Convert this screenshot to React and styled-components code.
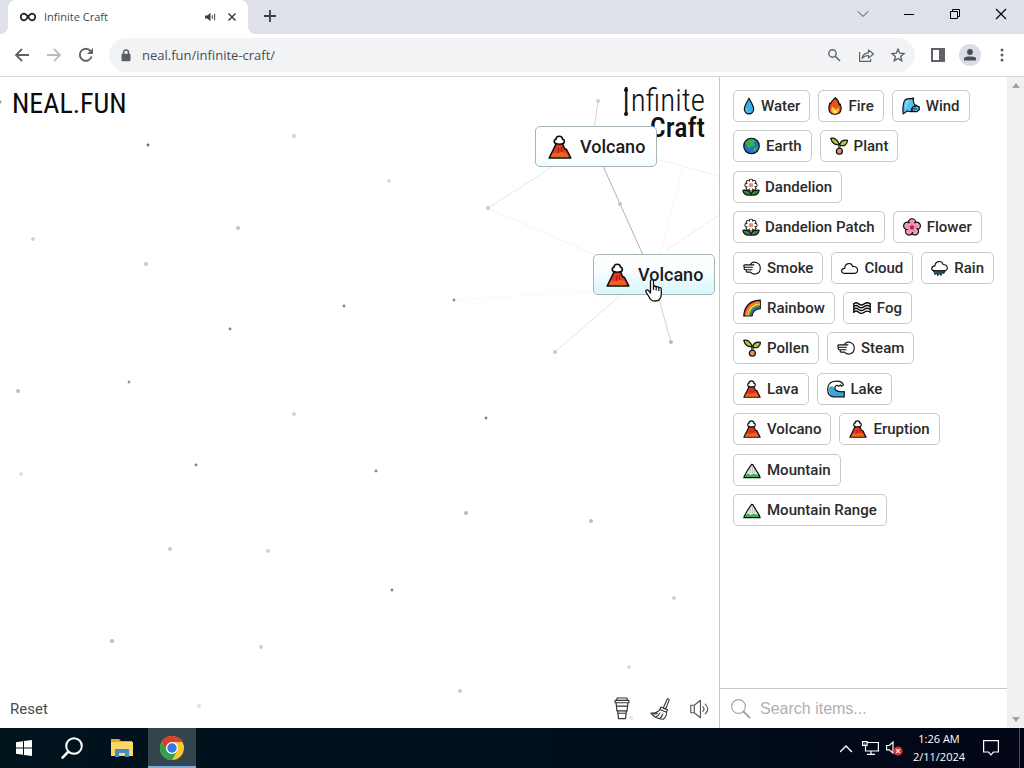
import React from 'react';
import styled, { createGlobalStyle } from 'styled-components';

const GlobalStyle = createGlobalStyle`
  *, *::before, *::after { box-sizing: border-box; }
  body { margin: 0; background: #fff; font-family: Roboto, "Liberation Sans", sans-serif; color: #1b1b1b; }
  button { font: inherit; color: inherit; background: none; border: 0; padding: 0; }
  svg { display: block; flex: none; overflow: visible; }
`;

const uiFont = '"Segoe UI", "Open Sans", "Noto Sans", sans-serif';

/* ---------- window frame ---------- */

const Window = styled.div`
  min-height: 100vh;
  display: grid;
  grid-template-rows: 34px 43px 1fr 40px;
`;

const TabStrip = styled.header`
  display: flex;
  background: #dee1e7;
  padding-left: 8px;
  font-family: ${uiFont};
`;

const Tab = styled.div`
  position: relative;
  display: flex;
  align-items: center;
  width: 240px;
  padding: 0 2px 0 12px;
  background: #fff;
  border-radius: 8px 8px 0 0;
  font-size: 11px;
  line-height: 16px;
  color: #45494d;

  &::before, &::after {
    content: "";
    position: absolute;
    bottom: 0;
    width: 8px;
    height: 8px;
  }
  &::before { left: -8px; background: radial-gradient(circle at 0 0, #dee1e7 8px, #fff 8px); }
  &::after { right: -8px; background: radial-gradient(circle at 100% 0, #dee1e7 8px, #fff 8px); }
`;

const TabTitle = styled.span`
  flex: 1;
  margin-left: 8px;
`;

const IconButton = styled.button`
  display: flex;
  align-items: center;
  justify-content: center;
  flex: none;
  width: ${(p) => p.$w || 32}px;
  height: ${(p) => p.$h || 32}px;
  color: ${(p) => p.$color || '#5f6368'};
`;

const NewTab = styled(IconButton)`
  margin-left: 6px;
`;

const WindowControls = styled.div`
  display: flex;
  margin-left: auto;
  color: #111;
`;

const Toolbar = styled.nav`
  display: flex;
  align-items: center;
  padding: 0 6px;
  background: #fff;
  border-bottom: 1px solid #d5d9dc;
`;

const Omnibox = styled.div`
  flex: 1;
  min-width: 0;
  display: flex;
  align-items: center;
  height: 34px;
  margin: 0 7px;
  padding: 0 1px 0 11px;
  border-radius: 17px;
  background: #f1f3f4;
`;

const UrlInput = styled.input`
  flex: 1;
  min-width: 0;
  margin-left: 10px;
  padding: 0;
  border: 0;
  outline: 0;
  background: none;
  font: 13px/20px ${uiFont};
  color: #4a4e52;
`;

const Avatar = styled.span`
  display: grid;
  place-items: center;
  width: 22px;
  height: 22px;
  border-radius: 50%;
  background: #dadde5;
`;

/* ---------- game page ---------- */

const Page = styled.main`
  display: grid;
  grid-template-columns: minmax(0, 1fr) 288px 17px;
`;

const Board = styled.section`
  position: relative;
  overflow: hidden;
  display: flex;
  flex-direction: column;
  justify-content: space-between;
  background: #fff;
`;

const Particles = styled.svg`
  position: absolute;
  left: 0;
  top: 0;
`;

const BoardHeader = styled.div`
  display: flex;
  justify-content: space-between;
  padding: 8px 14px 0 12px;
`;

const SiteLogo = styled.a`
  color: #0b0b0b;
  text-decoration: none;
  font-family: "Roboto Condensed", "Liberation Sans Narrow", "Liberation Sans", sans-serif;
  font-size: 28px;
  line-height: 38px;
`;

const GameLogo = styled.h1`
  margin: 0;
  display: flex;
  flex-direction: column;
  align-items: flex-end;
  color: #111;
  font-family: "Roboto Condensed", Roboto, sans-serif;
  font-size: 31px;
  font-weight: 300;
  line-height: 32px;
`;

const LogoInitial = styled.span`
  position: relative;
  display: inline-block;
  font-size: 38px;
  line-height: 30px;
  vertical-align: -4px;

  &::before, &::after {
    content: "";
    position: absolute;
    left: 50%;
    width: 4px;
    height: 4px;
    margin-left: -2px;
    border-radius: 50%;
    background: #111;
  }
  &::before { top: 1px; }
  &::after { bottom: 1px; }
`;

const LogoSecond = styled.span`
  font-size: 28px;
  font-weight: 500;
  line-height: 22px;
`;

const Instance = styled.button`
  position: absolute;
  left: ${(p) => p.$x}px;
  top: ${(p) => p.$y}px;
  display: flex;
  align-items: center;
  gap: 8px;
  height: 41px;
  padding: 0 11px 0 12px;
  border: 1px solid #a5b4b8;
  border-radius: 5px;
  background: ${(p) => (p.$hover ? 'linear-gradient(#fff, #fafeff 35%, #d7f6fb)' : 'linear-gradient(#fff 60%, #f2fdfe)')};
  font-size: 18px;
  font-weight: 500;
  line-height: 24px;
`;

const Pointer = styled.svg`
  position: absolute;
  left: 645px;
  top: 202px;
`;

const BoardFooter = styled.div`
  position: relative;
  display: flex;
  align-items: center;
  height: 39px;
  padding-left: 10px;
`;

const ResetButton = styled.button`
  margin-right: auto;
  font-size: 15px;
  line-height: 20px;
  color: #4c4c4c;
`;

const Sidebar = styled.aside`
  display: flex;
  flex-direction: column;
  border-left: 1px solid #c4c8c9;
  background: #fff;
`;

const ItemList = styled.ul`
  list-style: none;
  margin: 0;
  padding: 13px 12px 13px 13px;
  display: flex;
  flex-wrap: wrap;
  align-content: space-between;
  gap: 8px;
  min-height: 462px;
`;

const Chip = styled.button`
  display: flex;
  align-items: center;
  gap: 6px;
  height: 32px;
  padding: 0 9px;
  border: 1px solid #c8c8c8;
  border-radius: 5px;
  background: #fff;
  font-size: 15px;
  font-weight: 500;
  line-height: 20px;
  color: #2b2b2b;
`;

const SearchBar = styled.label`
  display: flex;
  align-items: center;
  gap: 10px;
  height: 40px;
  margin-top: auto;
  padding: 0 11px;
  border-top: 1px solid #c8c8c8;
  color: #a3a3a3;
`;

const SearchInput = styled.input`
  flex: 1;
  min-width: 0;
  padding: 0;
  border: 0;
  outline: 0;
  background: none;
  font: 16px/24px "Liberation Sans", Arial, sans-serif;
  &::placeholder { color: #b0b0b0; opacity: 1; }
`;

const ScrollTrack = styled.div`
  display: flex;
  flex-direction: column;
  align-items: center;
  justify-content: space-between;
  padding: 6px 0;
  background: #f1f1f2;
`;

/* ---------- taskbar ---------- */

const Taskbar = styled.footer`
  display: flex;
  align-items: stretch;
  background: linear-gradient(90deg, #00141c, #00101c 50%, #030617);
  color: #fff;
  font-family: ${uiFont};
`;

const TaskButton = styled.button`
  display: grid;
  place-items: center;
  width: ${(p) => p.$w || 48}px;
  height: 40px;
  color: #fff;
  background: ${(p) => (p.$active ? '#33464e' : 'none')};
  box-shadow: ${(p) => (p.$active ? 'inset 0 -2px #76aede' : 'none')};
`;

const Tray = styled.div`
  display: flex;
  align-items: center;
  margin-left: auto;
  padding-right: 4px;
`;

const Clock = styled.time`
  width: 66px;
  text-align: center;
  font-size: 11px;
  line-height: 18px;
`;

const DesktopEdge = styled.span`
  width: 1px;
  height: 40px;
  margin-left: 9px;
  background: #46505b;
`;

/* ---------- item icons, 24 unit grid ---------- */

const ink = { stroke: '#0c0c0c', strokeWidth: 1.6, strokeLinejoin: 'round', strokeLinecap: 'round' };

const volcano = (
  <>
    <path {...ink} fill="#e3371e" d="M8.500 8 1.200 23h21.600L18.500 14.500l-2-1-2.300-5.500z" />
    <path fill="#f07c20" d="M5 17.500l4 1 4-1.500 5.500.8 2.300 4.400H2.500z" opacity=".65" />
    <path d="M10.500 13v5M13.500 12v5" stroke="#a81a14" strokeWidth="1" fill="none" />
    <path {...ink} fill="#fff" d="M8.500 8.800C5.500 8.500 5.600 4.600 8 4.200 8 .2 14.500.2 14.500 4.200c2.600.4 2.500 4.400-.3 4.600-1.700.5-4 .5-5.700 0z" />
  </>
);
const sprout = (
  <>
    <path d="M12.500 17V9.500" {...ink} fill="none" strokeWidth="3" />
    <path d="M12.500 17V9.500" stroke="#8aa82a" strokeWidth="1.200" />
    <path {...ink} fill="#a8cc3c" d="M12 10C7 11.500 2.500 8 1 1.800c5-1 10 2 11 8.200z" />
    <path {...ink} fill="#a8cc3c" d="M13 11c0-5 4-7.500 10.200-6.500 0 5.500-4.500 8.500-10.200 6.500z" />
    <circle {...ink} cx="12.500" cy="19" r="4" fill="#e8915a" />
  </>
);
const petals = [0, 45, 90, 135, 180, 225, 270, 315];
const daisy = (
  <>
    <path {...ink} fill="#2f8a3c" d="M12 22.800C6 24 2 22 .8 16.500c5-.8 9 .5 11.200 5 2-4.500 6-5.800 11.200-5-1.200 5.500-5.200 7.500-11.200 6.300z" />
    {petals.map((a) => (
      <circle key={a} cx="12" cy="3.800" r="3.300" fill="#1a1a1a" transform={`rotate(${a} 12 9.500)`} />
    ))}
    {petals.map((a) => (
      <ellipse key={a} cx="12" cy="4.800" rx="1.900" ry="3" fill="#fff" transform={`rotate(${a} 12 9.500)`} />
    ))}
    <circle cx="12" cy="9.500" r="3.800" fill="#fff" />
    <circle cx="12" cy="9.500" r="3" fill="#e58f62" />
  </>
);
const puff = (
  <path {...ink} strokeWidth="1.500" fill="#fff" d="M10.500 6.500C13.500 2.500 23 4 23 12.300c0 8.200-9.500 9.700-13 5.200H5.500c-1.800 0-1.800-3.200 0-3.200H12M8 14.300H3c-2 0-2-3.300 0-3.300h9.500M6 11H2.500C.5 11 .5 7.800 2.500 7.800h12" />
);
const mountainOutline = 'M1.200 22.200C2 18 4.500 16.500 6 12.500L11.500 4.500l1.500.3 4 6.700c1 3 5 6 5.800 10.700z';
const mountain = (
  <>
    <path fill="#ececec" d={mountainOutline} />
    <path fill="#3fb154" d="M3.500 18 7 16.500l3 2 4-2 3 1.500 3.500-.5 2 4.500h-21z" />
    <path d="M9.500 10.500v6M12.500 8v8M15.500 11.500v5" stroke="#b4b4b4" strokeWidth="1.200" />
    <path {...ink} fill="none" d={mountainOutline} />
  </>
);

const ICONS = {
  water: { w: 12, box: '5 0 14 24', art: (
    <>
      <path {...ink} fill="#36b1e0" d="M12 1.500C9.500 7 5.800 11.500 5.800 16.300a6.200 6.200 0 0 0 12.400 0C18.200 11.500 14.500 7 12 1.500z" />
      <path d="M8.500 15c0 3 1.500 4.500 3.500 5" stroke="#7fd3ee" strokeWidth="1.300" fill="none" />
    </>
  ) },
  fire: { w: 14, box: '3 0 18 24', art: (
    <>
      <path {...ink} fill="#e8541d" d="M12.500 1C10 4 7 5 6.200 9L5.200 8C2.500 15 3 23 12 23c8.500 0 9.500-7.500 7-13.500l-1.200 1C17.500 7 15.500 3.500 12.500 1z" />
      <path fill="#fbc62d" d="M8.500 12.500c-3 5-1.500 9.500 3.500 9.500s6-5 4-8.500L13.500 17z" />
      <path fill="#fff2a0" d="M10 19.500 12 17l2 3-2 1.500z" />
    </>
  ) },
  wind: { w: 18, box: '0 0 24 24', art: (
    <>
      <path {...ink} fill="#58c4ee" d="M1.500 22.500C1 15 .5 7 4.500 3.500 8 1.500 12.500 3 15.500 1.500c-1.500 3 0 6.500 1.500 9.500l-1 4.500c-2 4-5 4.500-7.500 3.500C5.500 18 4.500 21.500 1.500 22.500z" />
      <path {...ink} fill="#4fb2e6" d="M14.500 13h3.500l.5-2.500L21 12.500l2 .5v4l-3 2.500h-5.500l-2-3z" />
      <path d="M14 16h5" {...ink} strokeWidth="1.200" />
      <path d="M5 14c0-4 1-7 3-9" stroke="#b4e8fa" strokeWidth="1.500" fill="none" />
    </>
  ) },
  earth: { w: 17, box: '0 0 24 24', art: (
    <>
      <circle {...ink} cx="12" cy="12" r="11" fill="#2672c8" />
      <path fill="#35b14b" d="M3 8c2-4 6-6 11-5.500l3 2-2 3.500 2.500 2-3 3-3-1-2 4-3-2-1-3zM15 15l5-2 1 1-4 6-3-1z" />
    </>
  ) },
  plant: { w: 18, box: '0 0 24 24', art: sprout },
  daisy: { w: 16, box: '1 0 22 24', art: daisy },
  flower: { w: 18, box: '0 0 24 24', art: (
    <>
      <g fill="#f39ac0" {...ink}>
        {[0, 72, 144, 216, 288].map((a) => (
          <ellipse key={a} cx="12" cy="5.800" rx="4.800" ry="4.800" transform={`rotate(${a} 12 12.500)`} />
        ))}
      </g>
      <circle cx="12" cy="12.500" r="6.200" fill="#f39ac0" />
      <path d="M12 6v7M6 10.500l6 2 6-2M8.500 17.500l3.500-5 3.500 5" stroke="#d95c94" strokeWidth="1" fill="none" />
      <circle cx="12" cy="12.500" r="2.800" fill="#b8265e" />
    </>
  ) },
  puff: { w: 18, box: '0 0 24 24', art: puff },
  cloud: { w: 17, box: '0 0 24 24', art: (
    <path {...ink} fill="#fff" d="M5 19.500C-.5 19.500-.5 12.500 5.200 12.500 5.500 4.500 15 3.500 16.500 10c8.300-1 9.100 9.500 2.500 9.500z" />
  ) },
  rain: { w: 17, box: '0 0 24 24', art: (
    <>
      <path {...ink} fill="#fff" d="M4.500 16C-.8 15 .5 9 5.500 9 6 1.500 15.500 1 17 7c7.300 0 7.800 8 2 9z" />
      <path {...ink} fill="#24566b" strokeWidth="1.200" d="M4 16h16l-2 4-1.500-2L14 22.500l-2-3-2.500 3.500-1.500-4-2 2z" />
    </>
  ) },
  rainbow: { w: 18, box: '0 0 24 24', art: (
    <>
      <path {...ink} fill="#d92b2b" d="M1 22.500C2 9 10 2 23 1.500V13c-6 0-10 4-11 9.500z" />
      <path d="M4 22C5.500 11.500 12 5 22.500 4.500" stroke="#f28a28" strokeWidth="2.400" fill="none" />
      <path d="M6.300 22C8 13 13.500 7.500 22.500 6.800" stroke="#f7d13a" strokeWidth="2.200" fill="none" />
      <path d="M8.500 22c1.500-7.500 6.500-12.500 14-13" stroke="#3ba350" strokeWidth="2" fill="none" />
      <path d="M10.500 22c1.500-6.500 6-10.500 12-11" stroke="#2c5fc4" strokeWidth="2.200" fill="none" />
    </>
  ) },
  fog: { w: 18, box: '0 0 24 24', art: (
    <>
      {[6.500, 10.200, 13.900, 17.600].map((y) => (
        <path key={y} {...ink} fill="none" strokeWidth="1.800" d={`M1 ${y}q3-3 6.500 0t7.500 0q4-3 8 0`} />
      ))}
      <path {...ink} fill="none" d="M1 6.500v11M23 6.500v11" />
    </>
  ) },
  volcano: { w: 18, box: '0 0 24 24', art: volcano },
  lake: { w: 18, box: '0 0 24 24', art: (
    <>
      <path fill="#fff" d="M23 22.500H9C-2 21-1.500 4.500 8.500 2 15 .5 20 2 22 7l-4 1.500c-5-2-8 1-7 4.500 1.500 2 6 3 12 2.500z" />
      <path fill="#38a6de" d="M2 10.500C5 7 8 8 11 12.500c2 3 6 3.500 12 3v6.500H9.500C4.500 21 2 16 2 10.500z" />
      <path {...ink} fill="none" d="M23 22.500H9C-2 21-1.500 4.500 8.500 2 15 .5 20 2 22 6.500l-2.500 2-1.500-2-2.500 2-2-1.500C10.500 8 10 10.500 11 12.500c2 3 6 3.500 12 3z" />
    </>
  ) },
  mountain: { w: 18, box: '0 0 24 24', art: mountain },
};

function ItemIcon({ name, size }) {
  const icon = ICONS[name];
  return (
    <svg width={size || icon.w} height={size || 18} viewBox={icon.box} aria-hidden="true">
      {icon.art}
    </svg>
  );
}

const ITEMS = [
  ['water', 'Water'], ['fire', 'Fire'], ['wind', 'Wind'], ['earth', 'Earth'], ['plant', 'Plant'],
  ['daisy', 'Dandelion'], ['daisy', 'Dandelion Patch'], ['flower', 'Flower'], ['puff', 'Smoke'],
  ['cloud', 'Cloud'], ['rain', 'Rain'], ['rainbow', 'Rainbow'], ['fog', 'Fog'], ['plant', 'Pollen'],
  ['puff', 'Steam'], ['volcano', 'Lava'], ['lake', 'Lake'], ['volcano', 'Volcano'],
  ['volcano', 'Eruption'], ['mountain', 'Mountain'], ['mountain', 'Mountain Range'],
];

/* x, y, grey level of each drifting particle */
const DOTS = [
  [0, 25, 140], [148, 68, 110], [294, 59, 208], [389, 104, 220], [33, 162, 210], [238, 151, 195],
  [146, 187, 203], [344, 229, 130], [230, 252, 130], [454, 223, 140], [488, 131, 203], [598, 24, 210],
  [620, 127, 195], [129, 305, 150], [18, 314, 190], [294, 337, 210], [486, 341, 125], [555, 275, 203],
  [671, 265, 185], [21, 397, 225], [196, 388, 130], [376, 394, 130], [466, 436, 185], [591, 444, 190],
  [170, 472, 200], [268, 474, 208], [392, 513, 130], [674, 521, 208], [112, 564, 190], [261, 570, 208],
  [629, 590, 220], [460, 614, 203], [199, 629, 225], [631, 641, 230],
];

/* x1, y1, x2, y2, grey level */
const LINES = [
  [598, 24, 593, 60, 215], [603, 89, 643, 178, 178], [488, 131, 560, 85, 230], [488, 131, 600, 180, 243],
  [555, 275, 630, 210, 228], [656, 212, 671, 265, 210], [454, 223, 600, 214, 249], [665, 174, 719, 138, 238],
  [656, 82, 719, 99, 240], [683, 90, 660, 178, 247], [389, 104, 535, 84, 252],
];

const grey = (v) => `rgb(${v},${v},${v})`;
const line = { fill: 'none', stroke: 'currentColor', strokeWidth: 1.2, strokeLinejoin: 'round', strokeLinecap: 'round' };

function BrowserChrome() {
  return (
    <>
      <TabStrip>
        <Tab>
          <svg width="16" height="16" viewBox="0 0 16 16" fill="none" stroke="#222" strokeWidth="1.700">
            <path d="M8 8C6.500 5.800 5.500 4.700 4 4.700a3.300 3.300 0 0 0 0 6.600C5.500 11.300 6.500 10.200 8 8s2.500-3.300 4-3.300a3.300 3.300 0 0 1 0 6.600C10.500 11.300 9.500 10.200 8 8z" />
          </svg>
          <TabTitle>Infinite Craft</TabTitle>
          <IconButton $w={16} $h={16} $color="#3c4043" aria-label="Mute tab">
            <svg width="11" height="10" viewBox="0 0 12 10">
              <path fill="currentColor" d="M0 3.300h2.500L6 .3v9.400l-3.500-3H0z" />
              <path d="M8 3v4M10.500 1.500v7" stroke="currentColor" strokeWidth="1.100" />
            </svg>
          </IconButton>
          <IconButton $w={28} $h={28} $color="#3c4043" aria-label="Close tab">
            <svg width="8" height="8" viewBox="0 0 8 8"><path d="M.5.5l7 7M7.500.5l-7 7" stroke="currentColor" strokeWidth="1.500" /></svg>
          </IconButton>
        </Tab>
        <NewTab $color="#3c4043" aria-label="New tab">
          <svg width="12" height="12" viewBox="0 0 12 12"><path d="M6 0v12M0 6h12" stroke="currentColor" strokeWidth="1.800" /></svg>
        </NewTab>
        <WindowControls>
          <IconButton $w={46} $h={28} $color="#444" aria-label="Search tabs">
            <svg width="10" height="6" viewBox="0 0 10 6"><path d="M0 .5l5 5 5-5" {...line} strokeWidth="1" /></svg>
          </IconButton>
          <IconButton $w={46} $h={28} $color="#000" aria-label="Minimize">
            <svg width="10" height="1" viewBox="0 0 10 1"><path fill="currentColor" d="M0 0h10v1H0z" /></svg>
          </IconButton>
          <IconButton $w={46} $h={28} $color="#000" aria-label="Restore">
            <svg width="10" height="10" viewBox="0 0 10 10"><path d="M.5 2.500h7v7h-7zM2.500 2.500v-2h7v7h-2" fill="none" stroke="currentColor" /></svg>
          </IconButton>
          <IconButton $w={46} $h={28} $color="#000" aria-label="Close">
            <svg width="10" height="10" viewBox="0 0 10 10"><path d="M0 0l10 10M10 0L0 10" stroke="currentColor" strokeWidth="1.200" /></svg>
          </IconButton>
        </WindowControls>
      </TabStrip>
      <Toolbar>
        <IconButton aria-label="Back">
          <svg width="14" height="14" viewBox="0 0 14 14"><path d="M14 7H1.500M7 1L1 7l6 6" fill="none" stroke="currentColor" strokeWidth="1.800" /></svg>
        </IconButton>
        <IconButton $color="#bbbdc0" aria-label="Forward">
          <svg width="14" height="14" viewBox="0 0 14 14"><path d="M0 7h12.500M7 1l6 6-6 6" fill="none" stroke="currentColor" strokeWidth="1.800" /></svg>
        </IconButton>
        <IconButton aria-label="Reload">
          <svg width="14" height="14" viewBox="0 0 14 14">
            <path d="M12.600 8.500A6 6 0 1 1 11.500 3L13 4.500" fill="none" stroke="currentColor" strokeWidth="1.900" />
            <path fill="currentColor" d="M14 0v6H8z" />
          </svg>
        </IconButton>
        <Omnibox>
          <svg width="12" height="13" viewBox="0 0 12 13">
            <path d="M3.500 5V3.500a2.500 2.500 0 0 1 5 0V5" fill="none" stroke="#5a5e62" strokeWidth="1.500" />
            <rect x="1.500" y="4.800" width="9" height="7.400" rx="1" fill="#5a5e62" />
          </svg>
          <UrlInput aria-label="Address" defaultValue="neal.fun/infinite-craft/" />
          <IconButton aria-label="Zoom">
            <svg width="12" height="12" viewBox="0 0 12 12"><circle cx="4.500" cy="4.500" r="3.700" fill="none" stroke="currentColor" strokeWidth="1.400" /><path d="M7.300 7.300L12 12" stroke="currentColor" strokeWidth="1.600" /></svg>
          </IconButton>
          <IconButton aria-label="Share">
            <svg width="15" height="13" viewBox="0 0 15 13">
              <path d="M.6 3v9.400h11V10M3 9.500C3.500 5.500 6 4 9.500 3.800V1l5 4-5 4V6.500C6.500 6.500 4.500 7.500 3 9.500z" fill="none" stroke="currentColor" strokeWidth="1.200" strokeLinejoin="round" />
            </svg>
          </IconButton>
          <IconButton aria-label="Bookmark">
            <svg width="14" height="14" viewBox="0 0 14 14"><path d="M7 1.200l1.700 4 4.300.4-3.300 2.900 1 4.200L7 10.500l-3.700 2.200 1-4.200L1 5.600l4.300-.4z" fill="none" stroke="currentColor" strokeWidth="1.400" /></svg>
          </IconButton>
        </Omnibox>
        <IconButton aria-label="Side panel">
          <svg width="14" height="14" viewBox="0 0 14 14"><path fill="currentColor" fillRule="evenodd" d="M0 0h14v14H0zM2 2v10h6V2z" /></svg>
        </IconButton>
        <IconButton aria-label="Profile">
          <Avatar>
            <svg width="12" height="12" viewBox="0 0 12 12" fill="#4a4e56"><circle cx="6" cy="3" r="2.900" /><path d="M0 11.500V9.300C0 7 12 7 12 9.300v2.200z" /></svg>
          </Avatar>
        </IconButton>
        <IconButton aria-label="Menu">
          <svg width="4" height="14" viewBox="0 0 4 14" fill="currentColor"><circle cx="2" cy="2" r="1.500" /><circle cx="2" cy="7" r="1.500" /><circle cx="2" cy="12" r="1.500" /></svg>
        </IconButton>
      </Toolbar>
    </>
  );
}

function GameBoard() {
  return (
    <Board>
      <Particles width="719" height="651" viewBox="0 0 719 651" aria-hidden="true">
        {LINES.map(([x1, y1, x2, y2, v]) => (
          <line key={`${x1}-${y1}-${x2}`} x1={x1} y1={y1} x2={x2} y2={y2} stroke={grey(v)} />
        ))}
        {DOTS.map(([x, y, v]) => (
          <circle key={`${x}-${y}`} cx={x} cy={y} r={v > 160 ? 2 : 1.4} fill={grey(v)} />
        ))}
      </Particles>
      <BoardHeader>
        <SiteLogo href="#home">NEAL.FUN</SiteLogo>
        <GameLogo>
          <span><LogoInitial>I</LogoInitial>nfinite</span>
          <LogoSecond>Craft</LogoSecond>
        </GameLogo>
      </BoardHeader>
      <Instance $x={535} $y={49}><ItemIcon name="volcano" size={24} />Volcano</Instance>
      <Instance $x={593} $y={177} $hover><ItemIcon name="volcano" size={24} />Volcano</Instance>
      <BoardFooter>
        <ResetButton>Reset</ResetButton>
        <IconButton $w={38} $color="#333" aria-label="Buy a coffee">
          <svg width="16" height="23" viewBox="0 0 16 24" {...line}>
            <path d="M3 1h10l.7 2.500H2.300zM.8 3.500h14.400V6H.8zM1.800 6l.9 8.500h10.600l.9-8.500M2 9.500h12M3.500 14.500l.8 8h7.400l.8-8M3.500 17h9" />
          </svg>
        </IconButton>
        <IconButton $w={38} $color="#333" aria-label="Clear board">
          <svg width="20" height="24" viewBox="0 0 22 24" {...line}>
            <path d="M19 1c1.500-.5 2.300.2 2 1.500L17.200 12l-2.600-1.100z" />
            <path d="M12 9.800l7.300 3-1 2.700-7.500-3z" />
            <path d="M10.800 12.500C9 15.500 5 16.500 1 16.500 3.500 20 8 23 14.500 23.300c2.500-2 3.800-5 3.800-7.800M4 17.500c1.500.2 3 0 4-.8M6.500 20.500c2-.5 3.500-2 4.300-4M10.500 22.500c1.800-1.500 3-3 3.500-5" />
          </svg>
        </IconButton>
        <IconButton $w={40} $color="#555" aria-label="Sound">
          <svg width="19" height="20" viewBox="0 0 20 20" {...line}>
            <path d="M.8 6h3.700L11 .8v18.400L4.500 14H.8zM4.500 6v8M13.500 7.500q2.500 2.500 0 5M16 4.800q5.500 5.200 0 10.400" />
          </svg>
        </IconButton>
      </BoardFooter>
      <Pointer width="17" height="23" viewBox="0 0 17 23" aria-hidden="true">
        <path d="M5.500 14V2.300c0-2.300 3-2.300 3 0V8c.3-1.500 2.700-1.300 2.700.4.5-1.200 2.600-1 2.600.8.6-1 2.500-.8 2.500 1V15c0 4-2 7-6.300 7-4 0-5-2-6.500-5L1 13.200c-1-2 1.300-3 2.600-1.500z" fill="#fff" stroke="#111" strokeWidth="1.300" strokeLinejoin="round" />
        <path d="M8.500 7.500V11M11.200 8.500V11.500M13.800 9.500V12" stroke="#111" strokeWidth="1.200" />
      </Pointer>
    </Board>
  );
}

function ItemSidebar() {
  return (
    <Sidebar>
      <ItemList>
        {ITEMS.map(([icon, name]) => (
          <li key={name}><Chip><ItemIcon name={icon} />{name}</Chip></li>
        ))}
      </ItemList>
      <SearchBar>
        <svg width="19" height="19" viewBox="0 0 19 19" {...line}><circle cx="7.500" cy="7.500" r="6.900" /><path d="M12.500 12.500l6 6" strokeWidth="1.800" /></svg>
        <SearchInput type="text" aria-label="Search items" placeholder="Search items..." />
      </SearchBar>
    </Sidebar>
  );
}

function SystemTaskbar() {
  return (
    <Taskbar>
      <TaskButton aria-label="Start">
        <svg width="16" height="16" viewBox="0 0 16 16" fill="#fff"><path d="M0 2.300l7-1v6.200H0zM8 1.100L16 0v7.500H8zM0 8.500h7v6.200l-7-1zM8 8.500h8V16l-8-1.100z" /></svg>
      </TaskButton>
      <TaskButton aria-label="Search">
        <svg width="22" height="22" viewBox="0 0 22 22" fill="none" stroke="#fff" strokeWidth="2"><circle cx="13" cy="9" r="7.800" /><path d="M7.500 14.500L.8 21.300" strokeWidth="2.500" /></svg>
      </TaskButton>
      <TaskButton $w={52} aria-label="File Explorer">
        <svg width="22" height="18" viewBox="0 0 22 18">
          <path fill="#e5a52a" d="M0 0h8l2 2h11v4H0z" />
          <path fill="#fbd768" d="M0 3h22v14H0z" />
          <path fill="#3f8ec6" d="M4 10h14v8h-4v-4H8v4H4z" />
        </svg>
      </TaskButton>
      <TaskButton $active aria-label="Chrome">
        <svg width="24" height="24" viewBox="0 0 24 24">
          <circle cx="12" cy="12" r="12" fill="#fbc92e" />
          <path fill="#dc3e30" d="M1.600 6A12 12 0 0 1 22.400 6H12L6.800 15z" />
          <path fill="#2fa04f" d="M1.600 6A12 12 0 0 0 12 24l5.200-9H6.800z" />
          <circle cx="12" cy="12" r="6" fill="#fff" />
          <circle cx="12" cy="12" r="4.700" fill="#347be0" />
        </svg>
      </TaskButton>
      <Tray>
        <IconButton $w={24} $color="#fff" aria-label="Show hidden icons">
          <svg width="12" height="7" viewBox="0 0 12 7"><path d="M.5 6.500L6 1l5.500 5.500" {...line} strokeWidth="1.400" /></svg>
        </IconButton>
        <IconButton $w={24} $color="#fff" aria-label="Network">
          <svg width="17" height="14" viewBox="0 0 17 14" fill="none" stroke="currentColor" strokeWidth="1.200">
            <path d="M5.500 1.500h10.900v8.500H3.500V5M.6.600h4.500v3.800H.6zM9 10v3M5 13.300h8M2.800 2.500v1" />
          </svg>
        </IconButton>
        <IconButton $w={24} $color="#fff" aria-label="Volume muted">
          <svg width="17" height="15" viewBox="0 0 17 15">
            <path d="M.6 4.500h2.600L7 1v11L3.200 8.800H.6z" fill="none" stroke="currentColor" strokeWidth="1.200" />
            <circle cx="12" cy="10" r="4.600" fill="#d6322f" />
            <path d="M10.200 8.200l3.600 3.600M13.800 8.200l-3.600 3.600" stroke="#fff" strokeWidth="1.200" />
          </svg>
        </IconButton>
        <Clock>1:26 AM<br />2/11/2024</Clock>
        <IconButton $w={38} $color="#fff" aria-label="Notifications">
          <svg width="16" height="16" viewBox="0 0 16 16"><path d="M.6.600h14.800v11.400h-5L8 14.800 5.600 12h-5z" fill="none" stroke="currentColor" strokeWidth="1.200" /></svg>
        </IconButton>
        <DesktopEdge />
      </Tray>
    </Taskbar>
  );
}

export default function App() {
  return (
    <Window>
      <GlobalStyle />
      <BrowserChrome />
      <Page>
        <GameBoard />
        <ItemSidebar />
        <ScrollTrack>
          <svg width="8" height="5" viewBox="0 0 8 5" fill="#a3a3a3"><path d="M0 5l4-5 4 5z" /></svg>
          <svg width="8" height="5" viewBox="0 0 8 5" fill="#a3a3a3"><path d="M0 0l4 5 4-5z" /></svg>
        </ScrollTrack>
      </Page>
      <SystemTaskbar />
    </Window>
  );
}
